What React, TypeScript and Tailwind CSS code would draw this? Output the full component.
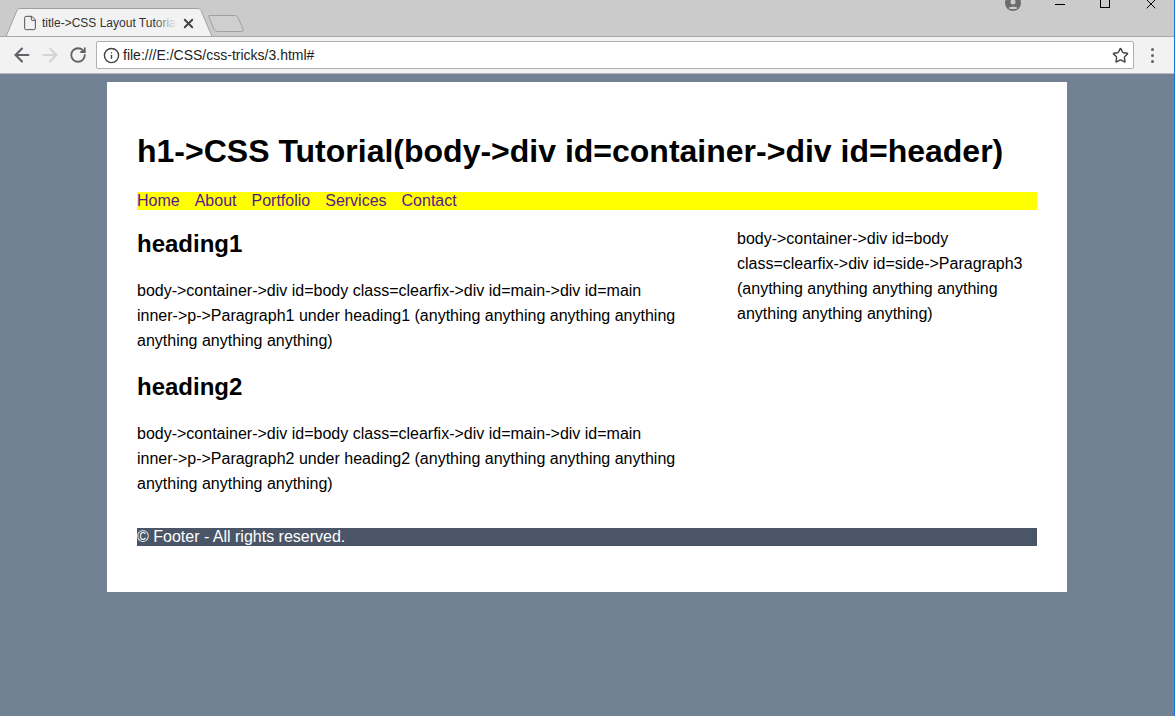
import { ArrowLeft, ArrowRight, RotateCw, X, Star, Info, File } from "lucide-react";

const navLinks = ["Home", "About", "Portfolio", "Services", "Contact"];

function TabStrip() {
    return (
        <div className="relative h-[37px] bg-[#cbcbcb] border-b border-[#a8a8a8] overflow-hidden">
            <svg className="absolute left-0 top-0" width="250" height="37" viewBox="0 0 250 37" aria-hidden="true">
                <path d="M0 36.5H6L17 10.5C18 9 19 8.5 20 8.5H197C199 8.5 200 9 201 10.5L212 36.5" fill="#f2f2f2" stroke="#a0a0a0" />
                <path d="M209 15.5H234C236 15.5 237 16 238 17.5L243 29C243.5 30.5 243 31.5 241 31.5H218C216 31.5 215 31 214 29.5L209 17C208.5 16 208.5 15.5 209 15.5Z" fill="#cfcfcf" stroke="#a0a0a0" />
            </svg>
            <div className="absolute left-[22px] top-[14px] flex items-center h-[18px]">
                <File size={16} strokeWidth={1.5} className="text-[#555]" />
                <span className="relative ml-[4px] w-[134px] overflow-hidden whitespace-nowrap text-[12px] text-[#333] font-['Liberation_Sans',sans-serif]">
                    title-&gt;CSS Layout Tutorial
                    <span className="absolute right-0 top-0 h-full w-[22px] bg-gradient-to-r from-transparent to-[#f2f2f2]" />
                </span>
                <X size={15} strokeWidth={3} className="ml-[5px] text-[#444]" />
            </div>
            <svg className="absolute left-[1005px] top-0" width="16" height="11" viewBox="0 0 16 11" aria-hidden="true">
                <path d="M8 -5a8 8 0 1 0 0 16a8 8 0 1 0 0-16Z" fill="#6b6b6b" />
                <circle cx="8" cy="2" r="2.5" fill="#cbcbcb" />
                <path d="M3.5 8c1-1.6 8-1.6 9 0c-1 1.6-8 1.6-9 0Z" fill="#cbcbcb" />
            </svg>
            <div className="absolute left-[1055px] top-[4px] w-[10px] h-px bg-black" />
            <div className="absolute left-[1100px] -top-[2px] w-[10px] h-[10px] border border-black" />
            <X size={16} strokeWidth={1.5} className="absolute left-[1143px] -top-[4px] text-black" />
        </div>
    );
}

function Toolbar() {
    return (
        <div className="h-[37px] bg-[#f2f2f2] border-b border-[#b8b8b8] flex items-center pl-[11px]">
            <ArrowLeft size={22} strokeWidth={2.3} className="text-[#5f6368]" />
            <ArrowRight size={22} strokeWidth={2.3} className="ml-[6px] text-[#d4d4d4]" />
            <RotateCw size={18} strokeWidth={2.4} className="ml-[8px] text-[#5f6368]" />
            <div className="ml-[9px] w-[1038px] h-[28px] bg-white border border-[#b0b0b0] rounded-[2px] flex items-center pl-[6px] pr-[4px]">
                <Info size={17} strokeWidth={2} className="text-[#444]" />
                <span className="ml-[3px] text-[14px] text-[#222] font-['Liberation_Sans',sans-serif]">file:///E:/CSS/css-tricks/3.html#</span>
                <Star size={17} strokeWidth={2} className="ml-auto text-[#444]" />
            </div>
            <div className="ml-[17px] flex flex-col gap-[3px]">
                <span className="w-[3px] h-[3px] rounded-full bg-[#5f6368]" />
                <span className="w-[3px] h-[3px] rounded-full bg-[#5f6368]" />
                <span className="w-[3px] h-[3px] rounded-full bg-[#5f6368]" />
            </div>
        </div>
    );
}

function Article({ title, children }: { title: string; children: string }) {
    return (
        <>
            <h2 className="mt-[20px] mb-[20px] text-[24px] leading-[28px] font-bold text-black">{title}</h2>
            <p className="mb-[18px] text-[16px] leading-[25px] text-black">{children}</p>
        </>
    );
}

export default function App() {
    return (
        <div className="w-[1176px] h-[716px] overflow-hidden flex bg-white font-['Liberation_Sans',Arial,sans-serif]">
            <div className="w-[1174px] shrink-0 bg-[#738195]">
                <TabStrip />
                <Toolbar />
                <div className="ml-[107px] mt-[8px] w-[960px] h-[510px] bg-white px-[30px] pt-[51px]">
                    <h1 className="text-[32px] leading-[37px] font-bold text-black">h1-&gt;CSS Tutorial(body-&gt;div id=container-&gt;div id=header)</h1>
                    <nav className="mt-[22px] h-[18px] bg-[#ffff00] flex gap-[15px] text-[16px] leading-[18px] text-[#551a8b]">
                        {navLinks.map((l) => (
                            <a key={l} href="#">{l}</a>
                        ))}
                    </nav>
                    <div className="flex justify-between">
                        <main className="w-[540px]">
                            <Article title="heading1">body-&gt;container-&gt;div id=body class=clearfix-&gt;div id=main-&gt;div id=main inner-&gt;p-&gt;Paragraph1 under heading1 (anything anything anything anything anything anything anything)</Article>
                            <Article title="heading2">body-&gt;container-&gt;div id=body class=clearfix-&gt;div id=main-&gt;div id=main inner-&gt;p-&gt;Paragraph2 under heading2 (anything anything anything anything anything anything anything)</Article>
                        </main>
                        <aside className="w-[300px] pt-[16px] text-[16px] leading-[25px] text-black">
                            body-&gt;container-&gt;div id=body class=clearfix-&gt;div id=side-&gt;Paragraph3 (anything anything anything anything anything anything anything)
                        </aside>
                    </div>
                    <footer className="mt-[14px] h-[18px] bg-[#4a5568] text-[16px] leading-[18px] text-white">© Footer - All rights reserved.</footer>
                </div>
            </div>
            <div className="w-px shrink-0 bg-[#0f7be0]" />
        </div>
    );
}
